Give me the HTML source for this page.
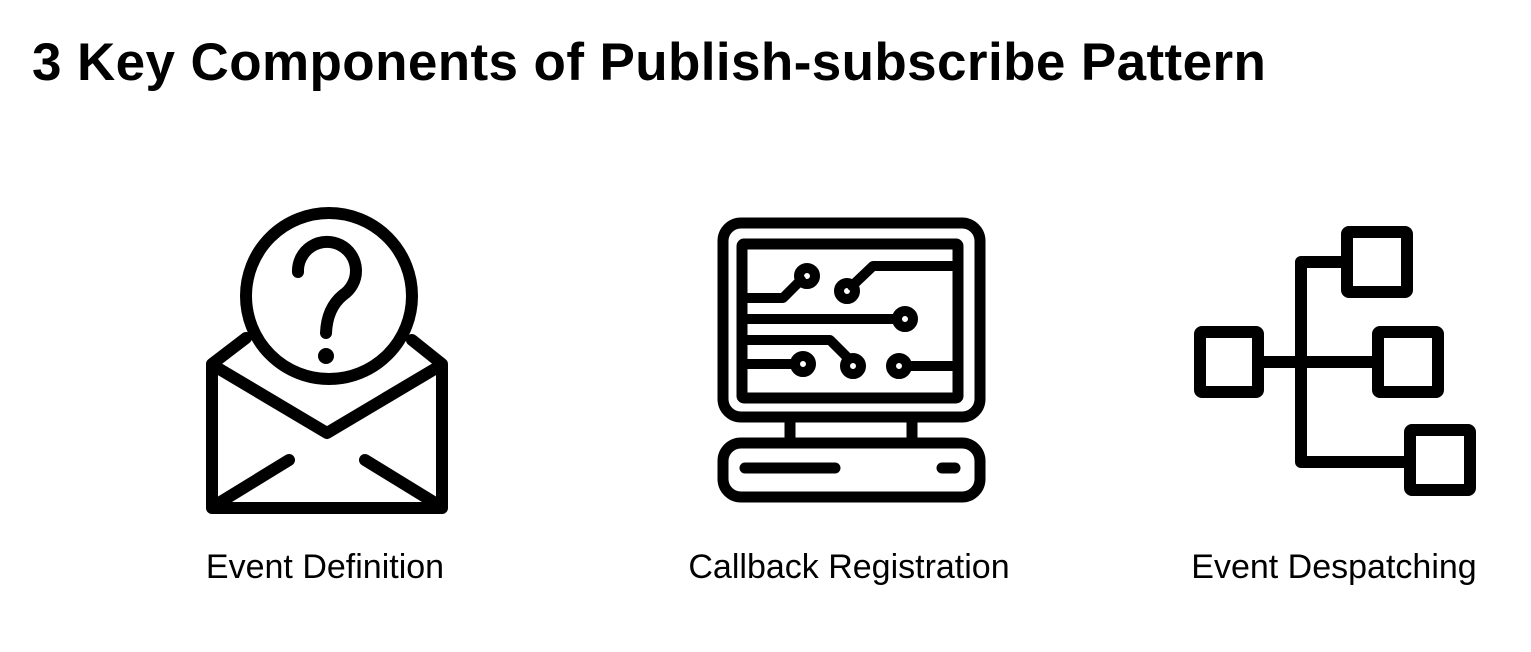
<!DOCTYPE html>
<html><head><meta charset="utf-8"><style>
html,body{margin:0;padding:0;background:#fff;width:1531px;height:652px;overflow:hidden;position:relative;font-family:"Liberation Sans",Arial,sans-serif;color:#000}
h1{position:absolute;left:32px;top:33px;margin:0;font-size:53px;font-weight:bold;line-height:60px;letter-spacing:0.4px;white-space:nowrap}
.l{position:absolute;top:547px;font-size:34px;line-height:40px;white-space:nowrap;transform:translateX(-50%)}
svg{position:absolute;left:0;top:0}
</style></head><body>
<h1>3 Key Components of Publish-subscribe Pattern</h1>
<svg width="1531" height="652" fill="none" stroke="#000" stroke-linecap="round" stroke-linejoin="round">
<g stroke-width="12">
<circle cx="329" cy="296" r="83"/>
<path d="M246 338 L212 364 V508 H442 V364 L412 340"/>
<path d="M216 367 L327 433 L438 367"/>
<path d="M214 506 L289 460 M365 460 L440 506"/>
<path d="M298 272 A29 29 0 1 1 343 295 Q327 308 326 333"/>
</g>
<circle cx="326" cy="356" r="8" fill="#000" stroke="none"/>
<g stroke-width="11">
<rect x="723" y="223" width="257" height="194" rx="18"/>
<rect x="742" y="244" width="216" height="154" rx="2"/>
<path d="M790 420 V440 M912 420 V440"/>
<rect x="723" y="443" width="257" height="54" rx="18"/>
<path d="M745 468 H835 M942 468 H955"/>
</g>
<g stroke-width="10">
<path d="M742 298 H783 L801 280"/>
<path d="M852 286 L873 266 H958"/>
<path d="M742 319 H897"/>
<path d="M742 340 H830 L849 359"/>
<path d="M742 364 H795"/>
<path d="M907 366 H958"/>
<circle cx="807" cy="276" r="8"/>
<circle cx="847" cy="291" r="8"/>
<circle cx="905" cy="319" r="8"/>
<circle cx="853" cy="366" r="8"/>
<circle cx="803" cy="364" r="8"/>
<circle cx="899" cy="366" r="8"/>
</g>
<g stroke-width="12">
<rect x="1200" y="332" width="58" height="60" rx="2"/>
<rect x="1347" y="232" width="60" height="60" rx="2"/>
<rect x="1378" y="332" width="60" height="60" rx="2"/>
<rect x="1410" y="430" width="60" height="60" rx="2"/>
<path d="M1347 262 H1301 V462 H1410 M1258 362 H1378"/>
</g>
</svg>
<div class="l" style="left:325px">Event Definition</div>
<div class="l" style="left:849px">Callback Registration</div>
<div class="l" style="left:1334px">Event Despatching</div>
</body></html>
